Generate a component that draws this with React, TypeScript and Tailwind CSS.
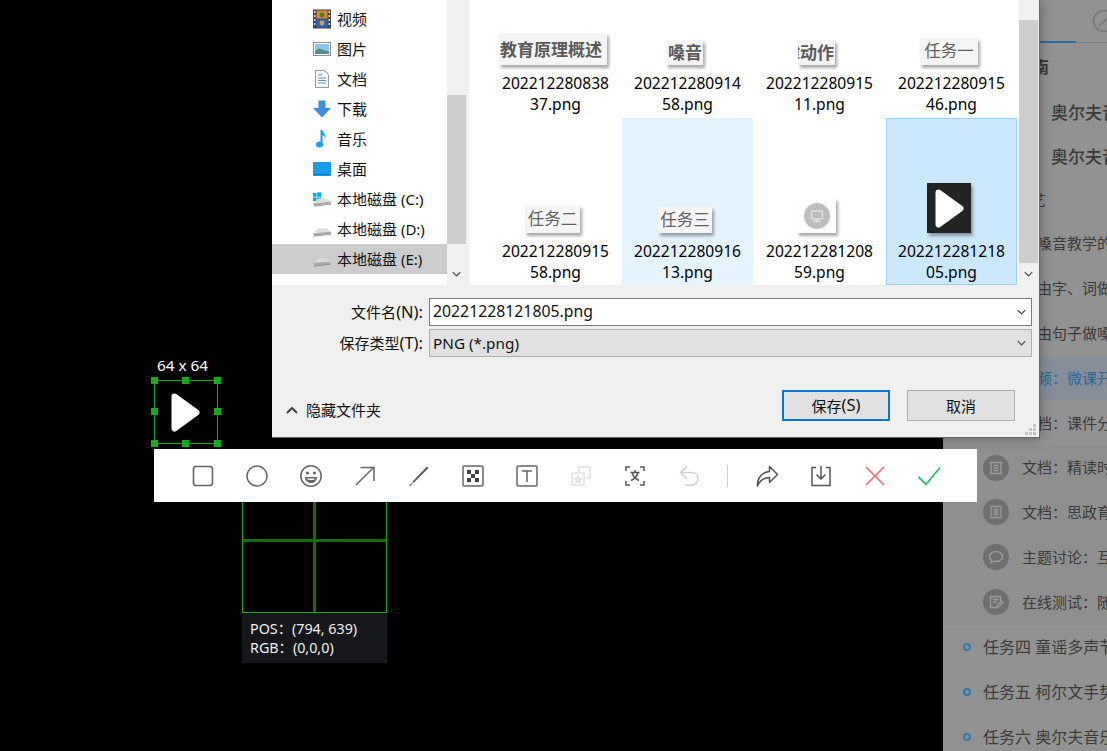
import { ReactNode } from 'react'

const FONT = "font-['Noto_Sans','Noto_Sans_CJK_SC',sans-serif]"

function Chevron({ className = '' }: { className?: string }) {
  return (
    <svg width="9" height="6" viewBox="0 0 12 8" className={className} fill="none" stroke="#444" strokeWidth="1.500">
      <path d="M1 1.500 6 6.500 11 1.500" />
    </svg>
  )
}

function Play({ className = '' }: { className?: string }) {
  return (
    <svg width="29" height="39" viewBox="0 0 29 39" className={className}>
      <polygon points="3.500,3.500 25.500,19.500 3.500,35.500" fill="#fff" stroke="#fff" strokeWidth="6" strokeLinejoin="round" />
    </svg>
  )
}

function Drive({ win }: { win?: boolean }) {
  return (
    <svg width="20" height="20" viewBox="0 0 20 20">
      {win && (
        <g fill="#00adef">
          <rect x="1" y="4" width="3.600" height="3.800" />
          <rect x="5.200" y="3.400" width="4" height="4.400" />
          <rect x="1" y="8.400" width="3.600" height="3.800" />
          <rect x="5.200" y="8.400" width="4" height="4.400" />
        </g>
      )}
      <path d="M6.500 9.500h8.500l4 3.500H2.500z" fill="#dcdcdc" />
      <path d="M1.500 14 19 12.800v1.800L2 17z" fill="#a8a8a8" />
      <path d="M2 17 19 14.800v.6L2.500 17.600z" fill="#777" />
    </svg>
  )
}

const navItems: { label: string; icon: ReactNode }[] = [
  {
    label: '视频',
    icon: (
      <svg width="20" height="20" viewBox="0 0 20 20">
        <rect x="1" y="0.500" width="18" height="19" fill="#444" />
        <rect x="4.500" y="1.500" width="11" height="8" fill="#d98a2b" />
        <rect x="4.500" y="10.500" width="11" height="8" fill="#2f62c9" />
        <circle cx="10" cy="6" r="2.400" fill="#3f7f3a" />
        <circle cx="10" cy="14" r="2.400" fill="#d9a02c" />
        <g fill="#ddd">
          <rect x="2" y="2" width="1.500" height="2" />
          <rect x="2" y="6" width="1.500" height="2" />
          <rect x="2" y="10" width="1.500" height="2" />
          <rect x="2" y="14" width="1.500" height="2" />
          <rect x="16.500" y="2" width="1.500" height="2" />
          <rect x="16.500" y="6" width="1.500" height="2" />
          <rect x="16.500" y="10" width="1.500" height="2" />
          <rect x="16.500" y="14" width="1.500" height="2" />
        </g>
      </svg>
    ),
  },
  {
    label: '图片',
    icon: (
      <svg width="20" height="20" viewBox="0 0 20 20">
        <rect x="1.500" y="3.500" width="17" height="13" fill="#fff" stroke="#8c8c8c" />
        <rect x="3" y="5" width="14" height="10" fill="#8fc3e8" />
        <path d="M3 12c3-3 6-2.500 8-1l6 1.500V15H3z" fill="#4f8f8a" />
      </svg>
    ),
  },
  {
    label: '文档',
    icon: (
      <svg width="20" height="20" viewBox="0 0 20 20">
        <path d="M3.500 1.500h9l4 4v13h-13z" fill="#fafafa" stroke="#9a9a9a" />
        <path d="M6 6h4M6 9h8M6 11.500h8M6 14h8" stroke="#5b8fc7" strokeWidth="1.200" />
      </svg>
    ),
  },
  {
    label: '下载',
    icon: (
      <svg width="20" height="20" viewBox="0 0 20 20">
        <path d="M6.500 1.500h7V9H19l-9 9.500L1 9h5.500z" fill="#3c8fe0" />
      </svg>
    ),
  },
  {
    label: '音乐',
    icon: (
      <svg width="20" height="20" viewBox="0 0 20 20">
        <path d="M9.500 1v13.500" stroke="#16a1f0" strokeWidth="2" />
        <ellipse cx="7.500" cy="15.500" rx="3.500" ry="3" fill="#16a1f0" />
        <path d="M10 1c.5 3 4.500 4 3.500 8.500C13 7 11.500 6.500 10 6z" fill="#16a1f0" />
      </svg>
    ),
  },
  {
    label: '桌面',
    icon: (
      <svg width="20" height="20" viewBox="0 0 20 20">
        <rect x="1" y="3" width="18" height="14" rx="1" fill="#1a9be8" />
        <rect x="2" y="15" width="16" height="1" fill="#0b6fb5" />
      </svg>
    ),
  },
  { label: '本地磁盘 (C:)', icon: <Drive win /> },
  { label: '本地磁盘 (D:)', icon: <Drive /> },
  { label: '本地磁盘 (E:)', icon: <Drive /> },
]

type Thumb = {
  name: [string, string]
  box: string
  inner: ReactNode
  state?: 'hover' | 'selected'
}

const files: Thumb[] = [
  {
    name: ['202212280838', '37.png'],
    box: 'w-[108px] h-[32px] bg-[#f5f5f5] mr-[5px] justify-end pr-[5px] font-bold text-[#5a5a5a] text-[17px]',
    inner: '：教育原理概述',
  },
  {
    name: ['202212280914', '58.png'],
    box: 'w-[37px] h-[25px] bg-[#f5f5f5] mr-[6px] justify-start pl-[2px] font-bold text-[#5a5a5a] text-[17px]',
    inner: '嗓音节',
  },
  {
    name: ['202212280915', '11.png'],
    box: 'w-[37px] h-[25px] bg-[#f5f5f5] mr-[6px] justify-end pr-[1px] font-bold text-[#5a5a5a] text-[17px]',
    inner: '律动作',
  },
  {
    name: ['202212280915', '46.png'],
    box: 'w-[58px] h-[27px] bg-[#f5f5f5] mr-[5px] justify-center text-[#606060] text-[16.500px]',
    inner: '任务一',
  },
  {
    name: ['202212280915', '58.png'],
    box: 'w-[55px] h-[28px] bg-[#f5f5f5] mr-[6px] justify-center text-[#606060] text-[16.500px]',
    inner: '任务二',
  },
  {
    name: ['202212280916', '13.png'],
    box: 'w-[54px] h-[26px] bg-[#f5f5f5] mr-[5px] justify-center text-[#606060] text-[16.500px]',
    inner: '任务三',
    state: 'hover',
  },
  {
    name: ['202212281208', '59.png'],
    box: 'w-[39px] h-[35px] bg-white mr-[6px] justify-center',
    inner: (
      <svg width="26" height="26" viewBox="0 0 26 26">
        <circle cx="13" cy="13" r="13" fill="#bdbdbd" />
        <rect x="7.500" y="8" width="11" height="8" rx="1" fill="none" stroke="#e4e4e4" strokeWidth="1.400" />
        <path d="M13 16v2.500M9.500 18.500h7" stroke="#e4e4e4" strokeWidth="1.400" />
      </svg>
    ),
  },
  {
    name: ['202212281218', '05.png'],
    box: 'w-[44px] h-[50px] bg-[#232323] mr-[5px] justify-center',
    inner: <Play />,
    state: 'selected',
  },
]

function FileItem({ file }: { file: Thumb }) {
  const stateClass =
    file.state === 'selected'
      ? 'bg-[#cce8ff] border border-[#99d1ff]'
      : file.state === 'hover'
        ? 'bg-[#e5f3ff] border border-[#e5f3ff]'
        : 'border border-transparent'
  return (
    <div className={`flex flex-col items-center justify-end pb-px h-[167px] ${stateClass}`}>
      <div className={`flex items-center overflow-hidden whitespace-nowrap leading-none mb-[8px] shadow-[2px_3px_3px_rgba(0,0,0,0.35)] ${file.box}`}>
        {file.inner}
      </div>
      <div className="text-center text-[15.600px] leading-[21px] text-black">
        <div>{file.name[0]}</div>
        <div>{file.name[1]}</div>
      </div>
    </div>
  )
}

function Scrollbar({ thumb }: { thumb: string }) {
  return (
    <div className="w-[19px] h-full bg-[#f0f0f0] flex flex-col items-center shrink-0">
      <div className={`w-full bg-[#cdcdcd] ${thumb}`} />
      <Chevron className="mt-auto mb-[8px]" />
    </div>
  )
}

function SaveDialog() {
  return (
    <div className={`absolute left-[272px] top-0 w-[768px] h-[438px] flex flex-col bg-[#f0f0f0] border-r border-b border-[#666] shadow-[0_0_12px_rgba(0,0,0,0.35)] ${FONT}`}>
      <div className="h-[285px] flex shrink-0">
        <div className="w-[175px] bg-white pt-[4px] shrink-0">
          {navItems.map((item, i) => (
            <div key={item.label} className={`h-[30px] flex items-center pl-[40px] gap-[5px] text-[15px] text-[#111] ${i === 8 ? 'bg-[#cccccc]' : ''}`}>
              {item.icon}
              <span className="whitespace-nowrap">{item.label}</span>
            </div>
          ))}
        </div>
        <Scrollbar thumb="mt-[95px] h-[149px]" />
        <div className="w-[3px] shrink-0" />
        <div className="w-[550px] bg-white overflow-hidden flex flex-col justify-end pl-[21px] shrink-0">
          <div className="grid grid-cols-[repeat(4,131px)] gap-x-px gap-y-px">
            {files.map(f => (
              <FileItem key={f.name.join('')} file={f} />
            ))}
          </div>
        </div>
        <Scrollbar thumb="mt-[20px] h-[243px]" />
      </div>

      <div className="flex-1 pt-[13px] relative text-[15px] text-[#111]">
        <div className="flex items-center gap-[6px]">
          <span className="w-[151px] text-right whitespace-nowrap">文件名<span className="text-[16.500px]">(N):</span></span>
          <div className="w-[603px] h-[28px] bg-white border border-[#7a7a7a] flex items-center justify-between pl-[3px] pr-[5px]">
            <span className="text-[15.800px]">20221228121805.png</span>
            <Chevron />
          </div>
        </div>
        <div className="flex items-center gap-[6px] mt-[3px]">
          <span className="w-[151px] text-right whitespace-nowrap">保存类型<span className="text-[16.500px]">(T):</span></span>
          <div className="w-[603px] h-[28px] bg-[#e1e1e1] border border-[#adadad] flex items-center justify-between pl-[3px] pr-[5px]">
            <span className="text-[15.300px]">PNG (*.png)</span>
            <Chevron />
          </div>
        </div>
        <div className="flex items-center mt-[33px] pr-[24px]">
          <svg width="12" height="8" viewBox="0 0 12 8" className="ml-[14px] mt-[9px]" fill="none" stroke="#444" strokeWidth="2">
            <path d="M1 7 6 2 11 7" />
          </svg>
          <span className="ml-[8px] mt-[9px]">隐藏文件夹</span>
          <div className="ml-auto w-[108px] h-[31px] bg-[#e1e1e1] border-2 border-[#0078d7] flex items-center justify-center">保存<span className="text-[16.500px]">(S)</span></div>
          <div className="ml-[17px] w-[108px] h-[31px] bg-[#e1e1e1] border border-[#adadad] flex items-center justify-center">取消</div>
        </div>
        <svg width="12" height="12" viewBox="0 0 12 12" className="absolute right-[2px] bottom-[1px]" fill="#c4c4c4">
          <rect x="8" y="0" width="3" height="3" />
          <rect x="4" y="4" width="3" height="3" />
          <rect x="8" y="4" width="3" height="3" />
          <rect x="0" y="8" width="3" height="3" />
          <rect x="4" y="8" width="3" height="3" />
          <rect x="8" y="8" width="3" height="3" />
        </svg>
      </div>
    </div>
  )
}

function PageIcon({ kind }: { kind: 'doc' | 'chat' | 'edit' }) {
  return (
    <div className="w-[26px] h-[26px] rounded-full bg-[#6f6f6f] flex items-center justify-center shrink-0">
      <svg width="16" height="16" viewBox="0 0 16 16" fill="none" stroke="#9b9b9b" strokeWidth="1.300">
        {kind === 'doc' && <path d="M3 2.500h10v11H3zM5.500 5.500h5M5.500 8h5M5.500 10.500h5" />}
        {kind === 'chat' && <path d="M8 2.500c3.500 0 6.500 2 6.500 5s-3 5-6.500 5c-.8 0-1.500-.1-2.200-.3L3 14l.5-2.800C2.300 10.300 1.500 9 1.500 7.500c0-3 3-5 6.500-5z" />}
        {kind === 'edit' && <path d="M12.500 7V2.500h-10v11h5M5 5.500h5M5 8h4M8.500 13.500l1-2.500 4-4 1.500 1.500-4 4z" />}
      </svg>
    </div>
  )
}

const docRows: { kind: 'doc' | 'chat' | 'edit'; text: string }[] = [
  { kind: 'doc', text: '文档：精读时间安排' },
  { kind: 'doc', text: '文档：思政育人' },
  { kind: 'chat', text: '主题讨论：互动交流' },
  { kind: 'edit', text: '在线测试：随堂练习' },
]

function BackgroundPage() {
  const row = 'h-[44.850px] flex items-center whitespace-nowrap'
  return (
    <div className={`absolute left-[943px] top-0 w-[164px] h-[751px] bg-[#929292] overflow-hidden text-[#3a3a3a] ${FONT}`}>
      <div className="h-[43px] border-b border-[#7d7d7d] relative">
        <div className="absolute left-[96px] bottom-[-1px] w-[37px] h-[2px] bg-[#2a6ea5]" />
        <svg width="24" height="24" viewBox="0 0 24 24" className="absolute left-[149px] top-[9px]" fill="none" stroke="#777" strokeWidth="1.500">
          <circle cx="12" cy="12" r="10.500" />
          <path d="M7 17 17 7" />
        </svg>
      </div>
      <div className="h-[48px] flex items-center pl-[74px] font-bold text-[16px] whitespace-nowrap">指南</div>
      <div className="h-[44px] flex items-center pl-[108px] font-medium text-[17px] whitespace-nowrap">奥尔夫音乐</div>
      <div className="h-[44px] flex items-center pl-[108px] font-medium text-[17px] whitespace-nowrap">奥尔夫音乐</div>
      <div className="h-[42px] flex items-center pl-[73px] text-[15px] whitespace-nowrap">工艺</div>
      <div className={`${row} pl-[94px] text-[15px]`}>嗓音教学的</div>
      <div className={`${row} pl-[94px] text-[15px]`}>由字、词做嗓音</div>
      <div className={`${row} pl-[94px] text-[15px]`}>由句子做嗓音</div>
      <div className={`${row} pl-[79px] text-[15px] text-[#2f6596] bg-[#868f98]`}>视频：微课开发</div>
      <div className={`${row} pl-[79px] text-[15px]`}>文档：课件分享</div>
      {docRows.map(d => (
        <div key={d.text} className={`${row} pl-[40px] gap-[13px] text-[15px] bg-[#8f8f8f]`}>
          <PageIcon kind={d.kind} />
          <span>{d.text}</span>
        </div>
      ))}
      {['任务四 童谣多声节奏', '任务五 柯尔文手势', '任务六 奥尔夫音乐'].map(t => (
        <div key={t} className={`${row} pl-[20px] text-[16px]`}>
          <span className="w-[8px] h-[8px] rounded-full border-2 border-[#2b7ab0] mr-[12px] shrink-0" />
          {t}
        </div>
      ))}
    </div>
  )
}

function Handle({ className }: { className: string }) {
  return <span className={`absolute w-[7px] h-[7px] bg-[#18a818] ${className}`} />
}

function Selection() {
  return (
    <>
      <div className={`absolute left-[157px] top-[355px] text-[15.300px] leading-[20px] text-white ${FONT}`}>64 x 64</div>
      <div className="absolute left-[154px] top-[380px] w-[64px] h-[64px] border border-[#18a818] flex items-center justify-center">
        <Play className="-ml-[2px]" />
        <Handle className="-left-[4px] -top-[4px]" />
        <Handle className="left-[27px] -top-[4px]" />
        <Handle className="-right-[4px] -top-[4px]" />
        <Handle className="-left-[4px] top-[27px]" />
        <Handle className="-right-[4px] top-[27px]" />
        <Handle className="-left-[4px] -bottom-[4px]" />
        <Handle className="left-[27px] -bottom-[4px]" />
        <Handle className="-right-[4px] -bottom-[4px]" />
      </div>
    </>
  )
}

function Magnifier() {
  return (
    <div className={`absolute left-[242px] top-[490px] w-[145px] ${FONT}`}>
      <div className="relative h-[123px] border border-[#18a818] border-t-0">
        <div className="absolute left-[70px] top-0 bottom-0 w-[3px] bg-[#156c15]" />
        <div className="absolute left-0 right-0 top-[49px] h-[3px] bg-[#156c15]" />
      </div>
      <div className="h-[50px] bg-[#15171b] px-[8px] pt-[6px] text-[14.300px] leading-[19px] text-[#eee]">
        <div>POS：(794, 639)</div>
        <div>RGB：(0,0,0)</div>
      </div>
    </div>
  )
}

const G = '#666'

const tools: ReactNode[] = [
  <svg key="rect" width="24" height="24" viewBox="0 0 24 24" fill="none" stroke={G} strokeWidth="1.600"><rect x="2.500" y="2.500" width="19" height="19" rx="2.500" /></svg>,
  <svg key="circle" width="24" height="24" viewBox="0 0 24 24" fill="none" stroke={G} strokeWidth="1.500"><circle cx="12" cy="12" r="10" /></svg>,
  <svg key="emoji" width="24" height="24" viewBox="0 0 24 24" fill="none" stroke={G} strokeWidth="1.500">
    <circle cx="12" cy="12" r="10.200" />
    <circle cx="8.500" cy="9" r="1.600" fill={G} stroke="none" />
    <circle cx="15.500" cy="9" r="1.600" fill={G} stroke="none" />
    <path d="M6 13h12c0 3.500-2.500 6-6 6s-6-2.500-6-6z" fill={G} stroke="none" />
    <path d="M8 14.500h8c-.5 1-1.500 1.500-4 1.500s-3.500-.5-4-1.500z" fill="#fff" stroke="none" />
  </svg>,
  <svg key="arrow" width="24" height="24" viewBox="0 0 24 24" fill="none" stroke={G} strokeWidth="1.500"><path d="M3 21 20.500 3.500M7.500 3.500h13.500v13.500" /></svg>,
  <svg key="pen" width="24" height="24" viewBox="0 0 24 24"><path d="M20 2.500 21.500 4 8 17.500 5 19.500l1.500-3z" fill="#555" /><path d="M5 19.500 2.500 22" stroke="#777" strokeWidth="1.200" /></svg>,
  <svg key="mosaic" width="24" height="24" viewBox="0 0 24 24" fill="none"><rect x="2" y="2" width="20" height="20" rx="1.500" stroke={G} strokeWidth="1.500" /><g fill="#444"><rect x="6" y="6" width="4" height="4" /><rect x="14" y="6" width="4" height="4" /><rect x="10" y="10" width="4" height="4" /><rect x="6" y="14" width="4" height="4" /><rect x="14" y="14" width="4" height="4" /></g></svg>,
  <svg key="text" width="24" height="24" viewBox="0 0 24 24" fill="none" stroke={G} strokeWidth="1.500"><rect x="2" y="2" width="20" height="20" rx="1.500" /><path d="M7 7h10M12 7v11" /></svg>,
  <svg key="copy" width="24" height="24" viewBox="0 0 24 24" fill="none" stroke="#e2e2e2" strokeWidth="1.500"><path d="M10 8V3h11v11h-6" /><rect x="3" y="9" width="12" height="12" /><path d="M9 12l1 2.500h2.500l-2 1.500.8 2.500L9 17l-2.300 1.500.8-2.500-2-1.500H8z" /></svg>,
  <svg key="ocr" width="24" height="24" viewBox="0 0 24 24" fill="none" stroke="#555" strokeWidth="1.500"><path d="M3 7V3h4M17 3h4v4M3 17v4h4M21 17v4h-4" /><path d="M7.500 8.500h9M12 6v2.500M9 8.500c1 4 4 6.500 7 8M15 8.500c-1 4-3.500 6.500-7 8" /></svg>,
  <svg key="undo" width="24" height="24" viewBox="0 0 24 24" fill="none" stroke="#cfcfcf" strokeWidth="1.500"><path d="M10 2.500 3.500 8.500 10 14.500M3.500 8.500H15c3.500 0 6 2.500 6 6s-2.500 6.500-6 6.500H8" /></svg>,
]

const tools2: ReactNode[] = [
  <svg key="share" width="24" height="24" viewBox="0 0 24 24" fill="none" stroke="#555" strokeWidth="1.500" strokeLinejoin="round"><path d="M2.500 22C2 14 7 8 14.500 7.500v-5l8 8-8 8v-5C9 13.500 5 16 2.500 22z" /></svg>,
  <svg key="down" width="24" height="24" viewBox="0 0 24 24" fill="none" stroke="#555" strokeWidth="1.500"><path d="M7 3.500H3v18h18v-18h-4M12 2v13M7.500 10.500 12 15l4.500-4.500" /></svg>,
  <svg key="x" width="24" height="24" viewBox="0 0 24 24" fill="none" stroke="#f26666" strokeWidth="1.600"><path d="M3 3 21 21M21 3 3 21" /></svg>,
  <svg key="ok" width="24" height="24" viewBox="0 0 24 24" fill="none" stroke="#27c26c" strokeWidth="1.800"><path d="M1.500 13 9 20.500 23 3.500" /></svg>,
]

function Toolbar() {
  return (
    <div className="absolute left-[154px] top-[449px] w-[823px] h-[53px] bg-white flex items-center pl-[22px]">
      {tools.map((icon, i) => (
        <div key={i} className="w-[54px] flex justify-center">{icon}</div>
      ))}
      <div className="w-px h-[22px] bg-[#d0d0d0] ml-[11px] mr-[12px]" />
      {tools2.map((icon, i) => (
        <div key={i} className="w-[54px] flex justify-center">{icon}</div>
      ))}
    </div>
  )
}

export default function App() {
  return (
    <div className="relative w-[1107px] h-[751px] bg-black overflow-hidden">
      <BackgroundPage />
      <SaveDialog />
      <Selection />
      <Magnifier />
      <Toolbar />
    </div>
  )
}
